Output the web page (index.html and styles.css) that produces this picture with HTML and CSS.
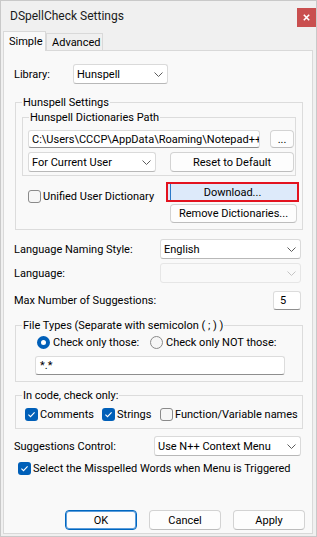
FILE: index.html
```html
<!DOCTYPE html>
<html lang="en">
<head>
    <meta charset="UTF-8">
    <meta name="viewport" content="width=device-width, initial-scale=1.0">
    <title>DSpellCheck Settings</title>
    <link rel="stylesheet" href="styles.css">
</head>
<body>
    <div class="window">
        <div class="titlebar">
            <span class="title">DSpellCheck Settings</span>
            <span class="close">
                <svg width="7" height="7" viewBox="0 0 7 7"><path d="M0.8 0.8 L6.2 6.2 M6.2 0.8 L0.8 6.2" stroke="#ffffff" stroke-width="1.6"/></svg>
            </span>
        </div>

        <div class="tabs">
            <div class="tab active">Simple</div>
            <div class="tab">Advanced</div>
        </div>

        <div class="panel">
            <!-- library -->
            <div class="row row-library">
                <span class="lbl lbl-library">Library:</span>
                <div class="combo combo-library">
                    <span>Hunspell</span>
                    <svg class="chevron" width="9" height="5" viewBox="0 0 9 5"><path d="M0.5 0.5 L4.5 4.5 L8.5 0.5" fill="none" stroke="#5c5c5c"/></svg>
                </div>
            </div>

            <fieldset class="group group-hunspell">
                <legend>Hunspell Settings</legend>
                <fieldset class="group group-path">
                    <legend>Hunspell Dictionaries Path</legend>
                    <div class="path-row">
                        <div class="field path-field">C:\Users\CCCP\AppData\Roaming\Notepad++</div>
                        <button class="btn btn-browse">...</button>
                    </div>
                    <div class="path-row path-row2">
                        <div class="combo combo-user">
                            <span>For Current User</span>
                            <svg class="chevron" width="9" height="5" viewBox="0 0 9 5"><path d="M0.5 0.5 L4.5 4.5 L8.5 0.5" fill="none" stroke="#5c5c5c"/></svg>
                        </div>
                        <button class="btn btn-reset">Reset to Default</button>
                    </div>
                </fieldset>
                <div class="dict-row">
                    <label class="check-label check-unified"><span class="box"></span>Unified User Dictionary</label>
                    <div class="dict-buttons">
                        <button class="btn btn-download">Download...</button>
                        <button class="btn btn-remove">Remove Dictionaries...</button>
                    </div>
                </div>
            </fieldset>

            <div class="row row-naming">
                <span class="lbl">Language Naming Style:</span>
                <div class="combo combo-wide">
                    <span>English</span>
                    <svg class="chevron" width="9" height="5" viewBox="0 0 9 5"><path d="M0.5 0.5 L4.5 4.5 L8.5 0.5" fill="none" stroke="#5c5c5c"/></svg>
                </div>
            </div>

            <div class="row row-language">
                <span class="lbl">Language:</span>
                <div class="combo combo-wide disabled">
                    <span></span>
                    <svg class="chevron" width="9" height="5" viewBox="0 0 9 5"><path d="M0.5 0.5 L4.5 4.5 L8.5 0.5" fill="none" stroke="#c4c4c4"/></svg>
                </div>
            </div>

            <div class="row row-max">
                <span class="lbl">Max Number of Suggestions:</span>
                <div class="field max-field">5</div>
            </div>

            <fieldset class="group group-types">
                <legend>File Types (Separate with semicolon ( ; ) )</legend>
                <div class="types-body">
                    <div class="radio-row">
                        <label class="radio-label radio-first"><span class="radio checked"></span>Check only those:</label>
                        <label class="radio-label"><span class="radio"></span>Check only NOT those:</label>
                    </div>
                    <div class="field types-field">*.*</div>
                </div>
            </fieldset>

            <fieldset class="group group-code">
                <legend>In code, check only:</legend>
                <div class="code-row">
                    <label class="check-label check-comments"><span class="box checked"><svg width="13" height="13" viewBox="0 0 13 13"><path d="M3.4 6.7 L5.5 8.7 L9.6 4.3" fill="none" stroke="#ffffff" stroke-width="1.1"/></svg></span>Comments</label>
                    <label class="check-label check-strings"><span class="box checked"><svg width="13" height="13" viewBox="0 0 13 13"><path d="M3.4 6.7 L5.5 8.7 L9.6 4.3" fill="none" stroke="#ffffff" stroke-width="1.1"/></svg></span>Strings</label>
                    <label class="check-label"><span class="box"></span>Function/Variable names</label>
                </div>
            </fieldset>

            <div class="row row-suggest">
                <span class="lbl">Suggestions Control:</span>
                <div class="combo combo-suggest">
                    <span>Use N++ Context Menu</span>
                    <svg class="chevron" width="9" height="5" viewBox="0 0 9 5"><path d="M0.5 0.5 L4.5 4.5 L8.5 0.5" fill="none" stroke="#5c5c5c"/></svg>
                </div>
            </div>

            <label class="check-label check-select"><span class="box checked"><svg width="13" height="13" viewBox="0 0 13 13"><path d="M3.4 6.7 L5.5 8.7 L9.6 4.3" fill="none" stroke="#ffffff" stroke-width="1.1"/></svg></span>Select the Misspelled Words when Menu is Triggered</label>

            <div class="dialog-buttons">
                <button class="btn btn-dialog btn-ok">OK</button>
                <button class="btn btn-dialog">Cancel</button>
                <button class="btn btn-dialog">Apply</button>
            </div>
        </div>
    </div>
</body>
</html>
```

FILE: styles.css
```css
/* base */
body {
    margin: 0;
    font-family: Roboto, "Noto Sans", sans-serif;
    font-size: 11px;
    color: #000000;
    background-color: #ffffff;
}

.window {
    width: 317px;
    height: 537px;
    box-sizing: border-box;
    border: 1px solid #c9c9c9;
    background-color: #f0f0f0;
    display: flex;
    flex-direction: column;
}

/* title bar */
.titlebar {
    height: 30px;
    display: flex;
    padding-left: 9px;
}

.title {
    font-size: 12px;
    line-height: 31px;
    color: #1a1a1a;
}

.close {
    margin-left: auto;
    margin-top: 7px;
    width: 19px;
    height: 19px;
    background-color: #c94f4f;
    display: flex;
    align-items: center;
    justify-content: center;
}

/* tabs */
.tabs {
    display: flex;
    padding-left: 2px;
    height: 20px;
}

.tab {
    box-sizing: border-box;
    margin-top: 2px;
    height: 18px;
    width: 57px;
    padding-left: 5px;
    line-height: 18px;
    border: 1px solid #d9d9d9;
    border-bottom: none;
    background-color: #f0f0f0;
}

.tab.active {
    margin-top: 0;
    height: 20px;
    width: 43px;
    line-height: 20px;
    background-color: #f9f9f9;
    position: relative;
    z-index: 1;
}

/* tab page */
.panel {
    box-sizing: border-box;
    width: 310px;
    height: 484px;
    margin: -1px 0 0 2px;
    border: 1px solid #d9d9d9;
    background-color: #f9f9f9;
    padding: 0 9px 0 10px;
    display: flex;
    flex-direction: column;
}

.row {
    display: flex;
    align-items: center;
    height: 20px;
}

.lbl {
    flex: 1;
}

.lbl-library {
    flex: none;
    width: 59px;
}

.row-library { margin-top: 13px; }
.row-naming { margin-top: 9px; }
.row-language { margin-top: 4px; }
.row-max { margin-top: 8px; height: 19px; }
.row-suggest { margin-top: 7px; }

/* combos, fields, buttons */
.combo {
    box-sizing: border-box;
    height: 20px;
    border: 1px solid #dadada;
    border-bottom-color: #b8b8b8;
    border-radius: 3px;
    background-color: #ffffff;
    padding: 0 4px 0 3px;
    display: flex;
    align-items: center;
    justify-content: space-between;
    white-space: nowrap;
}

.combo-library { width: 95px; }
.combo-wide { width: 141px; margin-right: 2px; }
.combo-suggest { width: 147px; margin-right: 2px; }
.combo-user { width: 128px; }

.combo.disabled {
    background-color: #f9f9f9;
    border-color: #e6e6e6;
}

.field {
    box-sizing: border-box;
    background-color: #ffffff;
    border: 1px solid #dcdcdc;
    border-bottom-color: #8e8e8e;
    border-radius: 3px;
    padding-left: 3px;
    white-space: nowrap;
    overflow: hidden;
    display: flex;
    align-items: center;
}

.btn {
    box-sizing: border-box;
    font-family: inherit;
    font-size: 11px;
    color: #000000;
    background-color: #fdfdfd;
    border: 1px solid #d3d3d3;
    border-bottom-color: #bdbdbd;
    border-radius: 4px;
    padding: 0;
    white-space: nowrap;
}

/* group boxes */
.group {
    margin: 0;
    min-width: 0;
    border: 1px solid #dcdcdc;
    padding: 0 4px 6px 6px;
}

.group legend {
    padding: 0 1px;
    line-height: 15px;
}

.group-hunspell {
    margin: 11px 0 0 1px;
}

.group-path {
    margin-right: 2px;
    padding: 0 1px 3px 5px;
}

.group-path legend {
    margin-left: 1px;
}

.path-row {
    display: flex;
    margin-top: 5px;
    height: 18px;
}

.path-field {
    width: 232px;
    height: 18px;
}

.btn-browse {
    width: 24px;
    height: 18px;
    margin-left: 10px;
}

.path-row2 {
    margin-top: 4px;
    height: 20px;
}

.btn-reset {
    width: 124px;
    height: 20px;
    margin-left: 14px;
}

.dict-row {
    display: flex;
    justify-content: space-between;
    margin-top: 8px;
}

.check-unified {
    margin: 5px 0 0 6px;
    align-self: flex-start;
}

.dict-buttons {
    width: 127px;
    margin-right: 1px;
    display: flex;
    flex-direction: column;
}

/* annotation box round the download button */
.btn-download {
    width: 129px;
    height: 16px;
    margin-left: -2px;
    border: none;
    border-radius: 0;
    outline: 2px solid #e3131f;
    background: linear-gradient(to right, #ddeafa 2px, #2a78c8 2px, #2a78c8 3px, #ddeafa 3px);
}

.btn-remove {
    height: 19px;
    margin-top: 4px;
}

/* checkboxes and radios */
.check-label,
.radio-label {
    display: flex;
    align-items: center;
    height: 15px;
    white-space: nowrap;
}

.box {
    box-sizing: border-box;
    width: 13px;
    height: 13px;
    border: 1px solid #8a8a8a;
    border-radius: 3px;
    background-color: #f6f6f6;
    margin-right: 2px;
    flex: none;
    display: flex;
}

.box.checked {
    border: none;
    background-color: #005fb8;
}

.radio {
    box-sizing: border-box;
    width: 13px;
    height: 13px;
    border: 1px solid #8a8a8a;
    border-radius: 50%;
    background-color: #f6f6f6;
    margin-right: 3px;
    flex: none;
}

.radio.checked {
    border: 4px solid #005fb8;
    background-color: #ffffff;
}

.group-types {
    margin: 8px 0 0 1px;
    padding-right: 17px;
}

.types-body {
    padding-left: 13px;
}

.radio-row {
    display: flex;
    margin-top: 2px;
}

.radio-first {
    width: 113px;
    margin-left: 2px;
}

.types-field {
    margin-top: 6px;
    height: 19px;
    padding-left: 4px;
}

.group-code {
    margin: 6px 0 0 1px;
}

.code-row {
    display: flex;
    margin-top: 4px;
    padding-left: 3px;
}

.check-comments { width: 77px; }
.check-strings { width: 58px; }

.check-select {
    margin: 5px 0 0 4px;
}

.max-field {
    width: 28px;
    height: 19px;
    margin-right: 2px;
    padding-left: 6px;
}

/* dialog buttons */
.dialog-buttons {
    display: flex;
    justify-content: flex-end;
    gap: 12px;
    margin: 34px -2px 0 0;
}

.btn-dialog {
    width: 72px;
    height: 20px;
}

.btn-ok {
    border: 1px solid #0067c0;
    box-shadow: inset 0 0 0 1px #5c9ddb;
}
```
